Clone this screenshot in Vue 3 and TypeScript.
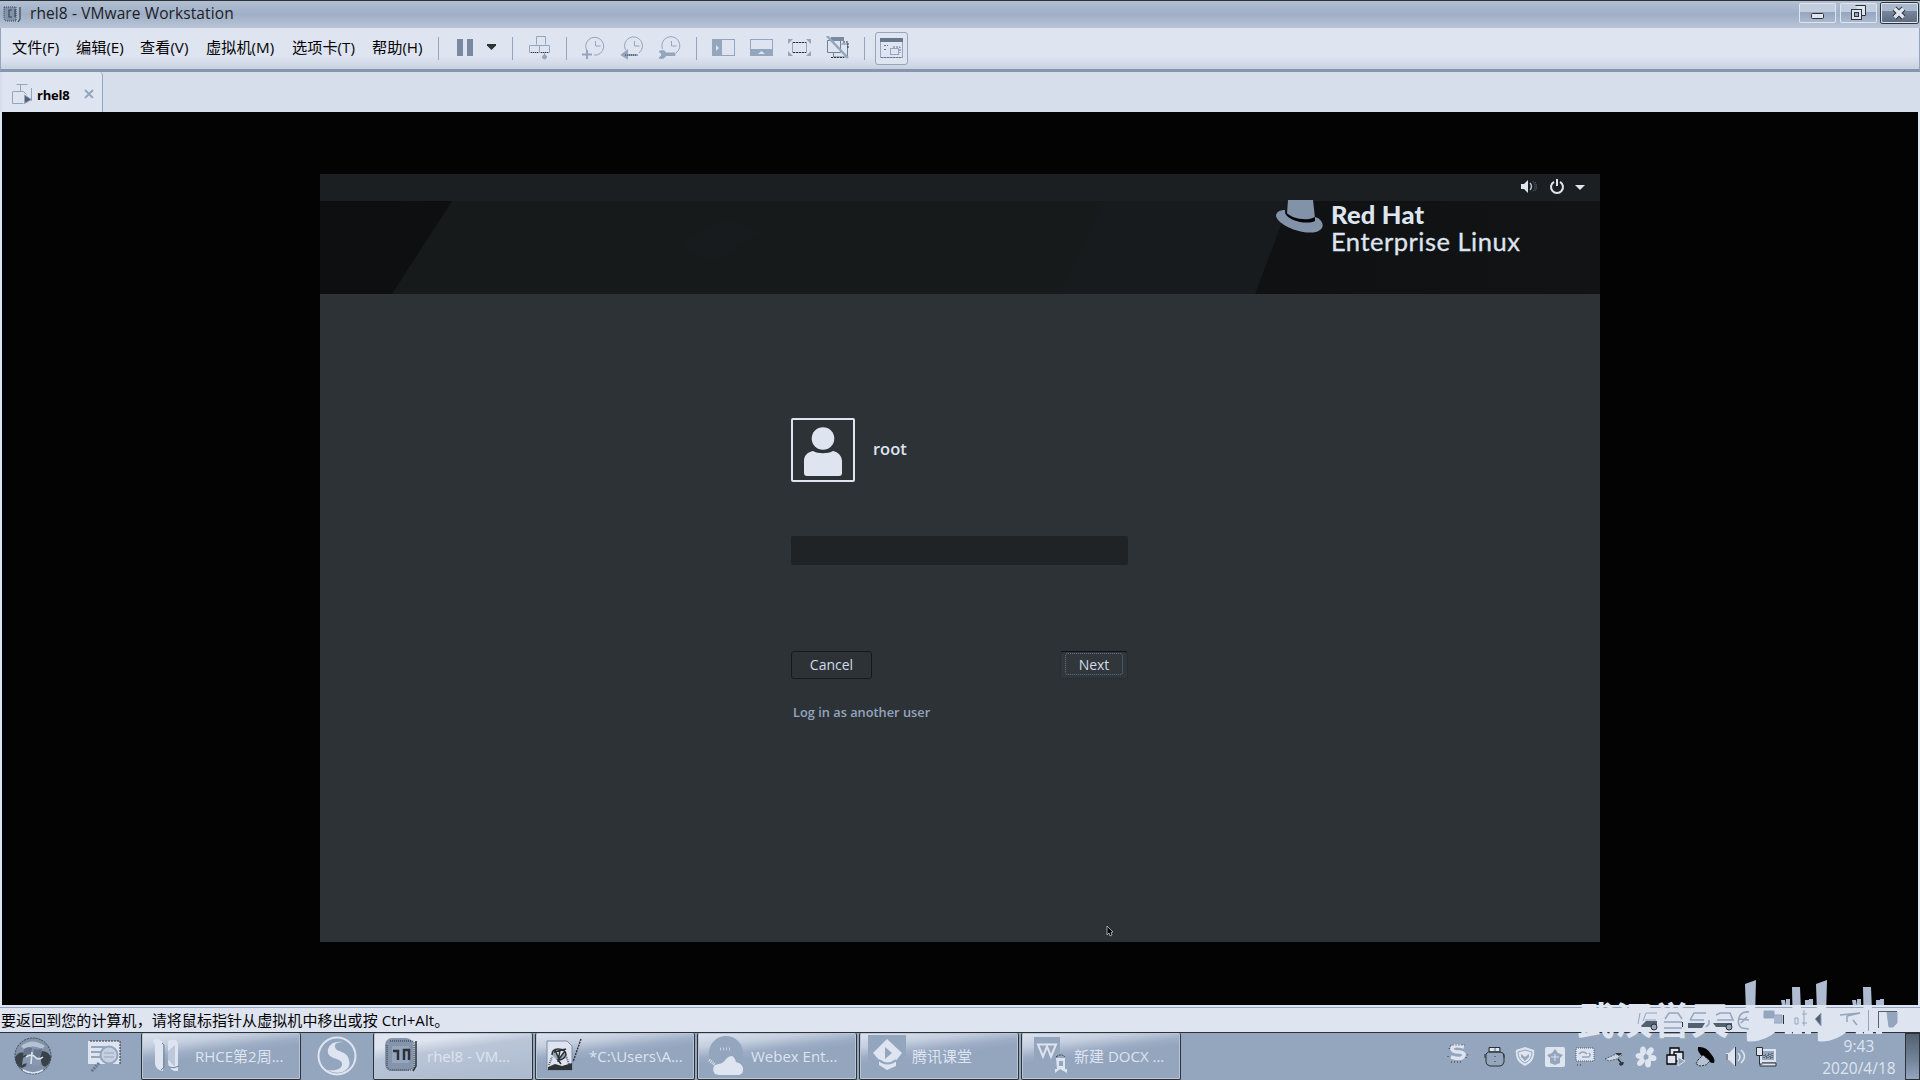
<script setup lang="ts">
interface Item { label: string; width: number }
interface Task { label: string; kind: string; textLeft: number }

const menus: Item[] = [
  { label: '文件(F)', width: 64 },
  { label: '编辑(E)', width: 64 },
  { label: '查看(V)', width: 66 },
  { label: '虚拟机(M)', width: 86 },
  { label: '选项卡(T)', width: 80 },
  { label: '帮助(H)', width: 66 },
]

const tasks: Task[] = [
  { label: '*C:\\Users\\A...', kind: 'note', textLeft: 53 },
  { label: 'Webex Ent...', kind: 'webex', textLeft: 53 },
  { label: '腾讯课堂', kind: 'class', textLeft: 52 },
  { label: '新建 DOCX ...', kind: 'wps', textLeft: 52 },
]
</script>

<template>
  <div class="desktop">
    <header class="titlebar">
      <svg class="app-icon" width="22" height="22" viewBox="0 0 22 22">
        <path d="M2 4h12v14H5q-3 0-3-3z" fill="#8293ac" stroke="#38414b" stroke-dasharray="1 1" />
        <path d="M10 7H7v7h3M13 6v8M18 4v12l-2 3" fill="none" stroke="#3d4650" stroke-width="1.200" />
      </svg>
      <span class="title">rhel8 - VMware Workstation</span>
      <div class="winbtns">
        <button class="wb"><svg width="37" height="20"><rect x="12.500" y="10.500" width="12" height="5" rx="1" fill="#dee4f0" stroke="#2d3236" /></svg></button>
        <button class="wb"><svg width="37" height="20"><path d="M15.500 2.500h10v10h-4" fill="#dee4f0" stroke="#2d3236" /><rect x="11.500" y="6.500" width="10" height="10" fill="#dee4f0" stroke="#2d3236" /><rect x="14.500" y="9.500" width="4" height="4" fill="#94a5be" stroke="#2d3236" /></svg></button>
        <button class="wb close"><svg width="37" height="20"><path d="M13.500 5.500l9 9M22.500 5.500l-9 9" stroke="#2d3236" stroke-width="5.500" /><path d="M13.500 5.500l9 9M22.500 5.500l-9 9" stroke="#dee4f0" stroke-width="3.500" /></svg></button>
      </div>
    </header>

    <nav class="menubar">
      <span v-for="m in menus" :key="m.label" class="menu" :style="{ width: m.width + 'px' }">{{ m.label }}</span>
      <div class="tools">
        <i class="sep"></i>
        <svg class="pause" width="17" height="24" viewBox="0 0 17 24"><path d="M0 3h6v17H0zM10 3h6v17h-6z" fill="#7889a1" /></svg>
        <svg class="caret" width="9" height="24" viewBox="0 0 9 24"><path d="M0 8h9v1.500L4.500 14 0 9.500z" fill="#2d3236" /></svg>
        <i class="sep after-caret"></i>
        <svg class="ic lead" viewBox="0 0 24 24">
          <path d="M8.500 8.500v-8h9v8" />
          <path d="M1.500 9.500h10v7h-10zM11.500 9.500h10v7h-10z" /><path d="M3 16.500h8M13 16.500h8" stroke="#2d3236" stroke-dasharray="1 1" />
          <path d="M16.500 16v4" /><circle cx="16.500" cy="21" r="2" fill="#94a5be" />
        </svg>
        <i class="sep gap"></i>
        <svg class="ic gap" viewBox="0 0 24 24">
          <path d="M5.500 14A9 9 0 1 1 16 19l-3 0M14.500 5v5h5" /><path d="M1 18.500h10M6 14v9" stroke-width="2" />
        </svg>
        <svg class="ic gap nudge" viewBox="0 0 24 24">
          <path d="M5.500 14A9 9 0 1 1 19 17M14.500 5v5h5" /><path d="M7 15l-5 4 5 3zM5 19h13" stroke-width="2" fill="#94a5be" /><path d="M5 19h12" stroke="#2d3236" stroke-dasharray="1 1" />
        </svg>
        <svg class="ic gap" viewBox="0 0 24 24">
          <path d="M5.500 13A9 9 0 1 1 19 17M14.500 5v5h5" /><path d="M2 15.500q4-2 6 0l1 1.500h9v2.500H9q-2 4-7 2.500l3-3-1-2z" fill="#94a5be" />
        </svg>
        <i class="sep lead"></i>
        <svg class="ic lead" viewBox="0 0 24 24"><rect x=".500" y="3.500" width="22" height="16" /><path d="M0 3h10v17H0z" fill="#94a5be" stroke="none" /><path d="M4 9v6l3-3z" fill="#dee4f0" stroke="none" /></svg>
        <svg class="ic gap" viewBox="0 0 24 24"><rect x=".500" y="3.500" width="22" height="16" /><path d="M0 13h23v7H0z" fill="#94a5be" stroke="none" /><path d="M8 18h7l-3.500-3z" fill="#dee4f0" stroke="none" /></svg>
        <svg class="ic gap" viewBox="0 0 24 24"><rect x="4.500" y="6.500" width="14" height="10" /><path d="M5 6.500h13M5 16.500h13" stroke="#2d3236" stroke-dasharray="2 1" /><path d="M0 3h5l-5 5zM18 3h5v5zM0 15v5h5zM23 15v5h-5z" fill="#94a5be" stroke="none" /></svg>
        <svg class="ic gap" viewBox="0 0 24 24"><path d="M1.500 4.500h13v12h-13zM7.500 16v5h14v-13h-6" stroke="#6f8098" /><path d="M5 1h13v4H5z" fill="#7889a1" stroke="none" /><path d="M5 21.500h13M17 6h5v6" stroke="#2d3236" stroke-dasharray="2 1" /><path d="M1 0l21 22" stroke-width="2.500" /></svg>
        <i class="sep gap"></i>
        <div class="active-tool">
          <svg class="ic" viewBox="0 0 24 24"><rect x=".500" y="2.500" width="22" height="19" /><path d="M0 2h23v4H0z" fill="#66778f" stroke="none" /><rect x="10.500" y="12.500" width="8" height="6" /><path d="M13 11h7v6M4 9.500h4M4 13.500h2M1 21.500h21" stroke="#66778f" stroke-dasharray="2 1" /></svg>
        </div>
      </div>
    </nav>

    <div class="tabs">
      <div class="tab">
        <svg width="22" height="22" viewBox="0 0 22 22" fill="none" stroke="#94a5be"><path d="M4.500.500h11M8.500 1v6M.500 7.500h11l3 3M.500 8v11.500h11M19.500 4v13" /><path d="M12.500 11l7 4.500-7 4z" fill="#52606f" /></svg>
        <b>rhel8</b>
        <svg class="x" width="10" height="10" viewBox="0 0 10 10"><path d="M1 1l8 8M9 1L1 9" stroke="#94a5be" stroke-width="1.800" /></svg>
      </div>
    </div>

    <main class="stage">
      <section class="vm">
        <div class="gnome-bar">
          <svg width="18" height="16" viewBox="0 0 18 16"><path d="M0 5h3l4-4v13l-4-4H0z" fill="#dee4f0" /><path d="M9 4q3 3.500 0 7" stroke="#aebbd0" fill="none" stroke-width="1.500" /><path d="M11.500 2q5 5.500 0 11M14 3q3 5 0 9" stroke="#66758a" fill="none" stroke-dasharray="1 1" /></svg>
          <svg class="power" width="16" height="16" viewBox="0 0 16 16" fill="none" stroke="#dee4f0" stroke-width="2"><path d="M5 2.800a6 6 0 1 0 6 0M8 0v7" /></svg>
          <svg class="arrow" width="10" height="16" viewBox="0 0 10 16"><path d="M0 6h10L5 11z" fill="#dee4f0" /></svg>
        </div>
        <div class="banner">
          <svg class="planes" width="1280" height="93" viewBox="0 0 1280 93">
            <path d="M132 0H970L935 93H72z" fill="#171a1b" />
            <path d="M360 42l47-24 35 14-50 30zM740 93l44-93h186l-35 93z" fill="#191c1e" opacity=".7" />
          </svg>
          <div class="logo">
            <svg width="47" height="33" viewBox="0 0 47 33"><path d="M12 0h25l2 18c-5 5-22 3-28-4z" fill="#8192a9" /><path d="M9 10c-5 0-9 2-9 6 2 9 25 19 40 16 8-2 9-9 2-14l-3-1c-2 8-25 6-30-5z" fill="#8192a9" /><path d="M10 12c4 6 20 10 29 5v4c-8 4-27 0-30-8z" fill="#030303" /></svg>
            <div class="brand"><b>Red Hat</b><span>Enterprise Linux</span></div>
          </div>
        </div>
        <div class="login">
          <div class="user">
            <div class="avatar"><svg width="60" height="60" viewBox="0 0 60 60" fill="#dee4f0"><circle cx="30" cy="18.500" r="11.300" /><path d="M11 53V41c0-6 4-9 9-10 5 3 15 3 20 0 5 1 9 5 9 10v12q0 3-3 3H14q-3 0-3-3z" /></svg></div>
            <span>root</span>
          </div>
          <div class="field"></div>
          <div class="buttons">
            <button class="gbtn cancel">Cancel</button>
            <button class="gbtn next"><span>Next</span></button>
          </div>
          <a class="other">Log in as another user</a>
        </div>
        <svg class="cursor" width="8" height="12" viewBox="0 0 8 12"><path d="M1 1l6 6-2 .500L6 10l-2 1-1-3-2 2z" fill="#030303" stroke="#b9c5d7" stroke-width=".800" /></svg>
      </section>
    </main>

    <footer class="status">
      <span class="hint">要返回到您的计算机，请将鼠标指针从虚拟机中移出或按 Ctrl+Alt。</span>
    </footer>

    <div class="taskbar">
      <svg class="start" width="38" height="38" viewBox="0 0 38 38">
        <circle cx="19" cy="19" r="18" fill="#8192a9" stroke="#3c4650" stroke-dasharray="2 1" />
        <path d="M1 21q3-7 10-5l3 4-2 9-4 2q-6-2-7-10zM37 20q-3-6-9-6l-2 5 2 9 3 2q5-3 6-10z" fill="#3a4249" />
        <path d="M7 9q11-9 24 0l-3 3q-9-5-18 0z" fill="#b5c1d4" />
        <path d="M10 12q4-3 8-1l-1 7q-4-2-8 1zM20 12q4 2 8-1l-1 8q-4 2-8 0z" fill="#64748a" />
        <path d="M9 21q4-3 8-1l-1 7q-4-2-8 1zM19 21q4 2 8 0l-1 7q-4 2-8 0z" fill="#8798b0" />
        <path d="M12 20q6-4 9 0t8 0M18 15l-1 12" stroke="#dee4f0" stroke-width="1.600" fill="none" />
        <path d="M9 33q10 6 20 0" stroke="#dee4f0" stroke-width="1.500" fill="none" />
      </svg>
      <svg class="finder" width="36" height="38" viewBox="0 0 36 38"><rect x="1" y="4" width="32" height="23" fill="#dee4f0" /><path d="M3 4h30v23" stroke="#2d3236" fill="none" stroke-dasharray="2 1" /><path d="M4 10h14M4 15h10M4 20h9" stroke="#94a5be" stroke-width="2" /><circle cx="22" cy="18" r="8.500" fill="#c6d0e0" stroke="#94a5be" stroke-width="2" /><path d="M12 26l-8 9" stroke="#697990" stroke-width="3" stroke-dasharray="2 1" /><path d="M17 16h10M17 20h10" stroke="#94a5be" /></svg>
      <div class="task first"><svg width="30" height="38" viewBox="0 0 30 38"><path d="M1 3q8-3 10 4v27q-7-1-8-7V8zM16 4q10-4 10 4v26h-4q-6-3-6-9z" fill="#dee4f0" /><path d="M10 6l2 2v22l-3 3M17 30q5 2 10-1" stroke="#6d7e95" fill="none" /><path d="M16 14v9l7 7V8z" fill="#bdc9db" /></svg><span style="left: 53px">RHCE第2周...</span></div>
      <svg class="sogou" width="40" height="40" viewBox="0 0 40 40"><circle cx="20" cy="20" r="18.500" fill="#94a5be" stroke="#dee4f0" stroke-width="2" /><path d="M27 6Q14 4 11 13c-2 11 12 8 14 14 1 7-8 8-15 7 14 7 25-1 22-10-2-10-13-7-14-13-1-4 4-5 9-5z" fill="#dee4f0" /></svg>
      <div class="task active"><svg width="36" height="38" viewBox="0 0 36 38"><rect x="1" y="1" width="28" height="33" rx="7" fill="#8494aa" /><path d="M6 4h20q4 0 4 4v20q-1 5-6 5H8q-5 0-5-5V8" fill="none" stroke="#52606f" stroke-width="2" stroke-dasharray="1 1" /><rect x="8" y="9" width="17" height="17" fill="#94a5be" /><path d="M9 14h5v9M20 23V13h5v10" stroke="#2d3236" stroke-width="2.500" fill="none" /><path d="M32 4v25l-3 5" stroke="#2d3236" stroke-width="1.500" fill="none" /></svg><span style="left: 53px">rhel8 - VM...</span></div>
      <div v-for="t in tasks" :key="t.kind" class="task" :class="t.kind">
        <svg v-if="t.kind === 'note'" width="38" height="38" viewBox="0 0 38 38"><path d="M1 4h20l5 5v24H1z" fill="#dee4f0" stroke="#7c8da5" /><path d="M2 30l7-3 7 2 10-3v7H2z" fill="#2d3236" /><path d="M6 18q0-6 6-6 8 0 8 6-2 5-8 5l3 4M8 15l12-3M9 13l4 9 6-8M14 13l-2 12" stroke="#2d3236" fill="#94a5be" stroke-width="1.500" /><path d="M3 28l3-8M23 27l-3-8" stroke="#52606f" stroke-width="2" stroke-dasharray="1 1" /><path d="M35 2L27 25" stroke="#2d3236" fill="none" stroke-width="1.400" stroke-dasharray="2 1" /></svg>
        <svg v-else-if="t.kind === 'webex'" width="38" height="42" viewBox="0 0 38 42"><circle cx="18" cy="18" r="17" fill="#94a5be" /><path d="M1 25q6 4 8 9" stroke="#dee4f0" stroke-width="3" stroke-dasharray="1 1" fill="none" /><path d="M7 39q-5-7 3-10 5 0 8-5 7-7 10 3 8 2 7 9-1 4-5 4H11z" fill="#dee4f0" /><path d="M12 14h10" stroke="#c6d0e0" stroke-width="3" stroke-dasharray="1 2" /></svg>
        <svg v-else-if="t.kind === 'class'" width="42" height="40" viewBox="0 0 42 40"><path d="M0 2h38v36H0z" fill="#94a5be" /><path d="M19 6l15 14-7 9-7 4-8-5-7-8z" fill="#dee4f0" /><path d="M17 14v12l7-6z" fill="#94a5be" /><path d="M11 28q8 7 17 0v5l-9 4-8-5z" fill="#dee4f0" /><path d="M11 27q9 7 17 0" fill="none" stroke="#94a5be" stroke-width="2" /></svg>
        <svg v-else width="38" height="40" viewBox="0 0 38 40"><path d="M2 2h26v28H2z" fill="#94a5be" /><path d="M6 9.500h18l-5 12-4-10-4 10z" stroke="#dee4f0" stroke-width="2" fill="none" /><path d="M24 23h9v11h2v4l-7-4-5 4v-4h2z" fill="#dee4f0" /><path d="M24 22q5-4 9 0" stroke="#2d3236" fill="none" stroke-dasharray="2 1" /><path d="M27 26v5h4v-5z" fill="#94a5be" /></svg>
        <span :style="{ left: t.textLeft + 'px' }">{{ t.label }}</span>
      </div>

      <div class="tray">
        <svg class="ime" viewBox="0 0 22 22"><path d="M17 3q-12-3-12 2 0 3 8 3 6 1 3 5-2 3-12 0" fill="none" stroke="#dee4f0" stroke-width="3.500" /><path d="M2 5l2-4h14M19 14l2-4M4 18h11M1 12v3" stroke="#2d3236" stroke-dasharray="1 2" fill="none" /></svg>
        <svg viewBox="0 0 22 22" fill="none" stroke="#2d3236"><path d="M5 3V1.500h11V6H5zM2 8q2-3 5-2h9q4 0 4 4v6q-1 4-4 4H6q-4-1-4-4z" /><path d="M6 2h4v3H6zM12 2h3v3h-3z" fill="#dee4f0" stroke="none" /><path d="M11 10v1M11 15v1M1 8v4M20 8v4" /></svg>
        <svg viewBox="0 0 22 22"><path d="M11 1l9 3c1 8-2 13-9 16C4 17 1 12 2 4z" fill="#dee4f0" /><path d="M11 4l7 2q0 8-7 11Q4 14 4 6z" fill="none" stroke="#94a5be" /><path d="M7 8l4 3 4-3v3l-4 4-4-4z" fill="#94a5be" /></svg>
        <svg viewBox="0 0 22 22"><rect x="1" y="1" width="20" height="20" rx="2" fill="#dee4f0" /><path d="M11 3l3 4 5 2-3 3v5l-5 2-5-2v-5L3 9l5-2z" fill="#94a5be" /><path d="M7 11h8M11 8v7" stroke="#dee4f0" /></svg>
        <svg viewBox="0 0 22 22"><rect x="2" y="2" width="18" height="13" fill="#dee4f0" stroke="#52606f" stroke-dasharray="1 1" /><path d="M5 8q4-4 8 0M8 11h7q2-2 0-4" stroke="#94a5be" fill="none" stroke-width="1.500" /><path d="M3 19h4" stroke="#2d3236" stroke-dasharray="1 2" /></svg>
        <svg viewBox="0 0 22 22"><path d="M1 13l11-5 6 1-5 4-8 2z" fill="#c8d2e1" stroke="#52606f" stroke-dasharray="2 1" /><path d="M11 7h7l-3 3z" fill="#2d3236" /><path d="M14 13l4 5h-3M16 19q3 0 3-3" stroke="#2d3236" fill="none" stroke-width="1.500" /></svg>
        <svg viewBox="0 0 22 22"><g fill="#dee4f0"><ellipse cx="8" cy="5" rx="3" ry="4.500" /><ellipse cx="15" cy="5.500" rx="3" ry="4.500" transform="rotate(40 15 5.500)" /><ellipse cx="17" cy="12" rx="3" ry="4.500" transform="rotate(95 17 12)" /><ellipse cx="13" cy="17" rx="3" ry="4.500" /><ellipse cx="6" cy="16" rx="3" ry="4.500" transform="rotate(45 6 16)" /><ellipse cx="5" cy="10" rx="3" ry="4.500" transform="rotate(95 5 10)" /></g><circle cx="11" cy="11" r="2.500" fill="#94a5be" /></svg>
        <svg viewBox="0 0 22 22"><g fill="#dee4f0" stroke="#030303" stroke-width="1.300"><path d="M5 2h9v9H5z" /><path d="M9 6h9v9H9z" /><path d="M2 9h9v9H2z" /></g><path d="M13 11v9l7-5z" fill="#94a5be" stroke="#dee4f0" /></svg>
        <svg viewBox="0 0 22 22"><path d="M3 1q8-1 13 7 5 6 3 9-5 0-11-6-6-5-5-10z" fill="#030303" /><path d="M3 14l5-5 7 6-4 4-6 1-4-2z" fill="#b5c1d4" stroke="#2d3236" stroke-dasharray="2 1" /></svg>
        <svg viewBox="0 0 22 22"><path d="M1 7h3l6-6v19l-6-6H1z" fill="#dee4f0" /><path d="M2 8v6M10.500 1v19" stroke="#2d3236" /><path d="M13 7q4 4 0 8M16 4q7 6 0 13" fill="none" stroke="#dee4f0" stroke-width="1.500" /></svg>
        <svg viewBox="0 0 22 22"><rect x="6" y="4" width="14" height="11" fill="#94a5be" stroke="#dee4f0" stroke-width="2" /><path d="M5 17h16v3H5z" fill="#dee4f0" stroke="#2d3236" /><path d="M1.500 1.500h6v8h-6zM4.500 9v9h3" fill="#dee4f0" stroke="#2d3236" /><path d="M9 12V9h2v3h2V8h2v4h2V7" stroke="#2d3236" fill="none" stroke-dasharray="1 1" /></svg>
      </div>
      <div class="clock"><span>9:43</span><span>2020/4/18</span></div>
      <div class="peek"></div>
    </div>

    <div class="watermark">
      <span>武汉誉天</span>
      <svg width="150" height="64" viewBox="0 0 150 64">
        <defs>
          <linearGradient id="fade" x1="0" y1="0" x2="0" y2="64" gradientUnits="userSpaceOnUse"><stop offset=".400" stop-color="#aebbd0" /><stop offset=".410" stop-color="#dee4f0" /></linearGradient>
        </defs>
        <g id="half">
          <path fill="url(#fade)" d="M2 5L13 1l-1 37q15-1 23 3 3 12-12 18-12 5-19 3zM49 8h8l2 47h-9zM38 21h4l1 6h-4zM43 20h4v7h-4zM39 31h8l2 24h-7zM62 21h4v6h-4zM66 20h4v7h-4zM61 32h8l-1 23h-6z" />
        </g>
        <use href="#half" x="71" />
        <g fill="none" stroke="#94a5be">
          <path d="M21 32h10v7H21z" fill="#94a5be" /><path d="M31 36h8v8h-8" fill="#a8b6cb" /><path d="M40.500 36v9" stroke="#2d3236" />
          <path d="M52 39h3v6h-3zM61 31v16M59 35h5M59 44h5" />
          <path d="M72 40l6-6v13z" fill="#52606f" /><path d="M97 36l20-2-13 3v6M110 41l4 5" stroke-width="1.500" />
          <path d="M125.500 31v21" /><path d="M144 33h10v11l-4 4h-4z" fill="#94a5be" /><path d="M135.500 32v17M136 32.500h18" stroke="#52606f" />
        </g>
      </svg>
      <svg class="drives" width="120" height="22" viewBox="0 0 120 22" fill="none" stroke="#94a5be">
        <path d="M3 3L1 14M6 11l3-8h11M8 10h11" /><path d="M4 16l5-5h11v6H5z" fill="#52606f" stroke="none" /><circle cx="17" cy="17" r="3" fill="#94a5be" stroke="#2d3236" />
        <path d="M28 9l4-6h9l4 6M27 12h18M27 18h18" stroke-width="1.500" /><path d="M45.500 12v5" stroke="#2d3236" />
        <path d="M53 10l4-7h12M53 10h14M69 17l3-3v-4" stroke-width="1.500" /><path d="M51 13h17l-3 5H51z" fill="#52606f" stroke="none" />
        <path d="M79 5l4-2h10l3 7H80" stroke-width="1.500" /><path d="M76 13h19v4H79z" fill="#52606f" stroke="none" /><circle cx="92" cy="17" r="3" fill="#94a5be" stroke="#2d3236" />
        <path d="M112 2q-8-1-10 6t3 10l7 1M102 9l10 1M104 13l6-6" stroke-width="1.500" />
      </svg>
    </div>
  </div>
</template>

<style>
body { background: #030303; }
</style>

<style scoped>
* { box-sizing: border-box; }
svg { display: block; flex: none; }
button { padding: 0; font: inherit; }
.desktop { position: relative; width: 1920px; height: 1080px; overflow: hidden; display: flex; flex-direction: column; background: #dee4f0; color: #030303; font-family: "Open Sans", "Noto Sans CJK SC", sans-serif; }
.titlebar { height: 28px; flex: none; display: flex; border-top: 1px solid #2d3236; background: linear-gradient(#b2bfd2, #9fafc6 50%, #b9c5d7); }
.app-icon { margin: 2px 0 0 2px; }
.title { margin-left: 6px; font-size: 15.500px; line-height: 25px; color: #1c2024; letter-spacing: .1px; white-space: nowrap; }
.winbtns { margin-left: auto; padding: 2px 2px 0 0; display: flex; gap: 4px; }
.wb { width: 37px; height: 20px; border: 0; border-radius: 2px; box-shadow: inset 0 0 0 1px #dee4f0; background: linear-gradient(#c2cddd 45%, #94a5be 46%, #aebbd0); }
.wb.close { box-shadow: 0 0 0 1px #2d3236, inset 0 0 0 1px #dee4f0; background: linear-gradient(#aab8cd 40%, #76869c 41%, #5d6b7d); }
.menubar { height: 44px; flex: none; display: flex; align-items: center; padding: 0 0 3px 11px; border: solid #94a5be; border-width: 0 1px 3px; border-bottom-color: #8696ae; background: linear-gradient(#dee4f0 28px, #d4dce9 35px, #c6d0e0 41px); }
.menu { flex: none; font-size: 15.200px; line-height: 24px; white-space: nowrap; }
.tools { display: flex; align-items: center; margin: 2px 0 0; }
.sep { flex: none; width: 1px; height: 23px; background: #94a5be; }
.pause { margin-left: 18px; }
.caret { margin-left: 13px; }
.after-caret { margin-left: 16px; }
.lead { margin-left: 15px; }
.ic { width: 24px; height: 24px; fill: none; stroke: #94a5be; }
.gap { margin-left: 14px; }
.nudge { position: relative; left: 1px; }
.active-tool { margin-left: 10px; width: 33px; height: 33px; border: 1px solid #94a5be; border-radius: 3px; padding: 3px 4px; background: #dee4f0; }
.tabs { height: 40px; flex: none; display: flex; padding-left: 2px; background: #d7deeb; }
.tab { width: 101px; display: flex; align-items: center; padding: 6px 0 0 10px; background: #dee4f0; border-right: 1px solid #94a5be; border-radius: 0 4px 0 0; }
.tab b { margin-left: 3px; width: 36px; font-size: 13px; letter-spacing: -.2px; }
.tab .x { margin-left: 11px; margin-top: -2px; }
.stage { height: 893px; flex: none; margin: 0 2px; padding-top: 62px; background: #030303; display: flex; justify-content: center; }
.vm { position: relative; width: 1280px; height: 768px; background: #2d3236; display: flex; flex-direction: column; color: #dee4f0; }
.gnome-bar { height: 27px; background: #1c1f22; display: flex; justify-content: flex-end; padding: 5px 15px 0 0; }
.power { margin-left: 10px; }
.arrow { margin-left: 10px; }
.banner { position: relative; height: 93px; display: flex; justify-content: flex-end; background: linear-gradient(90deg, #0d0f10, #0e1011 60%, #111314); }
.planes { position: absolute; inset: 0; }
.logo { position: relative; display: flex; width: 324px; margin-top: -1px; }
.brand { margin-left: 8px; display: flex; flex-direction: column; font-family: Lato, sans-serif; white-space: nowrap; }
.brand b { font-size: 25.500px; line-height: 28px; font-weight: 900; letter-spacing: .2px; }
.brand span { font-size: 25.500px; line-height: 27px; letter-spacing: .5px; -webkit-text-stroke: .3px #dee4f0; }
.login { padding: 124px 0 0 471px; width: 808px; display: flex; flex-direction: column; font-size: 16px; }
.user { display: flex; align-items: center; height: 64px; }
.avatar { width: 64px; height: 64px; border: 2px solid #dee4f0; border-radius: 2px; }
.user span { margin-left: 18px; font-weight: 600; font-size: 16.500px; margin-top: -3px; }
.field { margin-top: 54px; width: 337px; height: 29px; background: #1f2326; border-radius: 2px; }
.buttons { margin-top: 86px; display: flex; justify-content: space-between; width: 337px; }
.gbtn { height: 28px; background: transparent; border: 1px solid #16191b; border-radius: 3px; color: #d2dae8; font-size: 14px; line-height: 26px; }
.cancel { width: 81px; }
.next { width: 68px; background: #30363a; border-style: solid dotted dotted; border-color: #101213 #22272a #22272a; padding: 0 4px 2px; }
.next span { display: block; height: 22px; line-height: 21px; border: 1px dotted #64748a; border-radius: 3px; }
.other { margin: 24px 0 0 2px; font-size: 12.800px; line-height: 18px; font-weight: 600; color: #94a5be; white-space: nowrap; }
.cursor { position: absolute; left: 786px; top: 751px; }
.status { height: 27px; flex: none; display: flex; border-top: 2px solid #dee4f0; box-shadow: inset 0 1px #94a5be; }
.hint { padding-left: 1px; font-size: 15px; line-height: 26px; letter-spacing: .07px; white-space: nowrap; }
.taskbar { height: 48px; flex: none; display: flex; background: #94a5be; border-top: 1px solid #2d3236; }
.start { margin: 4px 0 0 14px; }
.finder { margin: 4px 0 0 35px; }
.task { position: relative; flex: none; width: 160px; height: 47px; margin-right: 2px; border: 1px solid #2d3236; border-top: 0; border-radius: 2px; box-shadow: inset 0 0 0 1px #bac6d8; background: linear-gradient(173deg, #dee4f0 0, #c3cede 22%, #9dadc5 38%, #94a5be 48%); padding: 4px 0 0 10px; }
.task span { position: absolute; top: 12px; font-size: 15px; line-height: 22px; color: #dee4f0; white-space: nowrap; }
.first { margin: 0 16px 0 18px; }
.sogou { margin: 3px 16px 0 0; }
.active { background: linear-gradient(172deg, #dee4f0 0, #dee4f0 22%, #bac6d8 40%, #abb9ce); }
.class { padding: 0 0 0 8px; }
.wps, .webex { padding-top: 2px; }
.tray { margin: 13px 0 0 264px; display: flex; gap: 8.100px; }
.tray svg { width: 22px; height: 22px; }
.tray .ime { margin: -2px 7px 0 0; }
.clock { margin: 2px 0 0 40px; width: 84px; display: flex; flex-direction: column; align-items: center; color: #dee4f0; font-size: 15.500px; line-height: 22px; white-space: nowrap; }
.peek { margin-left: auto; width: 15px; border: 1px solid #2d3236; background: linear-gradient(#52606f, #75869c 60%, #94a5be); }
.watermark { position: absolute; left: 1577px; top: 979px; display: flex; color: #dee4f0; }
.watermark svg { overflow: visible; }
.watermark span { width: 166px; font: 700 38px/77px "Noto Sans CJK SC", sans-serif; height: 64px; white-space: nowrap; }
.watermark .drives { position: absolute; left: 60px; top: 31px; }
</style>
